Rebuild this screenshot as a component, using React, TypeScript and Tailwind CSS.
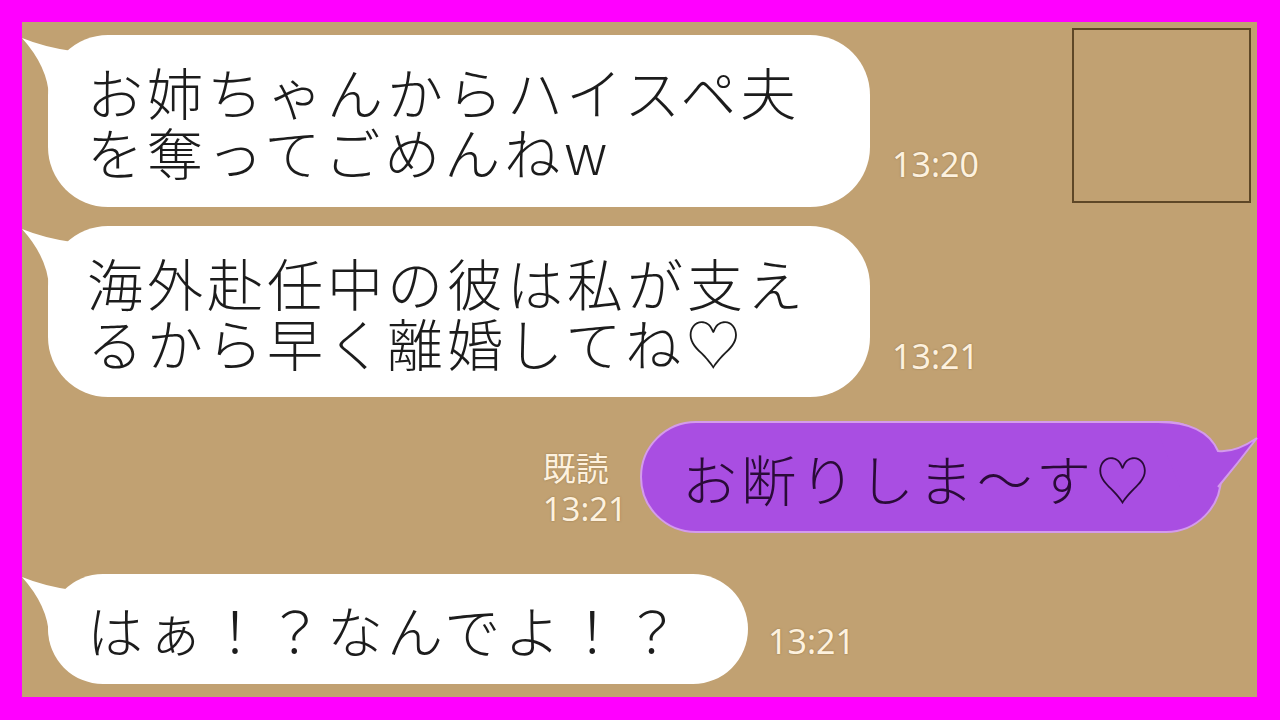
import React from "react";

const jp = "font-['Noto_Sans_CJK_JP',sans-serif]";
const tm =
  "font-['Noto_Sans','Noto_Sans_CJK_JP',sans-serif] text-[34px] leading-none text-[#fdf1de] [text-shadow:0_0_2px_rgba(110,80,40,0.55)]";

function LeftTail() {
  return (
    <svg
      className="absolute -left-[26px] top-0 overflow-visible"
      width="90"
      height="80"
      viewBox="0 0 90 80"
    >
      <path d="M0 3 Q22 12 50 16 L62 40 L27 62 Q26 32 0 3 Z" fill="#ffffff" />
    </svg>
  );
}

function LeftBubble({
  className,
  children,
}: {
  className: string;
  children: React.ReactNode;
}) {
  return (
    <div className={"relative bg-white shrink-0 " + className}>
      <LeftTail />
      <div
        className={
          jp +
          " relative text-[56px] font-light leading-[60px] tracking-[4px] text-[#1c1c1c] whitespace-nowrap"
        }
      >
        {children}
      </div>
    </div>
  );
}

function PurpleBubble() {
  return (
    <div className="relative w-[582px] h-[112px] bg-[#a94ee2] border-2 border-[#d49bec] rounded-full flex items-center pl-[40px] shrink-0">
      <svg
        className="absolute left-[498px] -top-[2px] overflow-visible"
        width="120"
        height="80"
        viewBox="0 0 120 80"
      >
        <path
          d="M15 1 Q65 0 78 30 Q95 32 117 17 Q98 42 78 66 L40 66 L15 4 Z"
          fill="#a94ee2"
        />
        <path
          d="M15 1 Q65 0 78 30 Q95 32 117 17 Q98 42 78 66"
          fill="none"
          stroke="#d49bec"
          strokeWidth="2"
        />
      </svg>
      <span
        className={
          jp +
          " relative text-[55px] font-light leading-[60px] tracking-[4px] text-[#2a0b38] whitespace-nowrap"
        }
      >
        お断りしま〜す♡
      </span>
    </div>
  );
}

export default function App() {
  return (
    <div className="w-[1280px] h-[720px] bg-[#ff00ff] pt-[22px] pl-[22px] pr-[23px] pb-[23px]">
      <div className="w-full h-full bg-[#c1a172] flex flex-col pt-[13px]">
        {/* Row 1 */}
        <div className="flex items-end">
          <LeftBubble className="ml-[26px] w-[822px] h-[172px] rounded-[60px] pl-[39px] pt-[26px]">
            お姉ちゃんからハイスペ夫
            <br />
            を奪ってごめんねw
          </LeftBubble>
          <span className={tm + " ml-[22px] mb-[26px]"}>13:20</span>
          <div className="ml-auto mr-[6px] self-start -mt-[7px] w-[179px] h-[175px] border-2 border-[#5e4727]" />
        </div>

        {/* Row 2 */}
        <div className="flex items-end mt-[19px]">
          <LeftBubble className="ml-[26px] w-[822px] h-[171px] rounded-[60px] pl-[39px] pt-[26px]">
            海外赴任中の彼は私が支え
            <br />
            るから早く離婚してね♡
          </LeftBubble>
          <span className={tm + " ml-[22px] mb-[24px]"}>13:21</span>
        </div>

        {/* Row 3 */}
        <div className="flex justify-end items-end mt-[24px] pr-[35px]">
          <div
            className={
              "flex flex-col mr-[13px] mb-[4px] font-['Noto_Sans','Noto_Sans_CJK_JP',sans-serif] text-[33px] leading-[40px] text-[#fdf1de] [text-shadow:0_0_2px_rgba(110,80,40,0.55)]"
            }
          >
            <span>既読</span>
            <span>13:21</span>
          </div>
          <PurpleBubble />
        </div>

        {/* Row 4 */}
        <div className="flex items-end mt-[41px]">
          <LeftBubble className="ml-[26px] w-[700px] h-[110px] rounded-full pl-[39px] flex items-center">
            はぁ！？なんでよ！？
          </LeftBubble>
          <span className={tm + " ml-[20px] mb-[26px]"}>13:21</span>
        </div>
      </div>
    </div>
  );
}
